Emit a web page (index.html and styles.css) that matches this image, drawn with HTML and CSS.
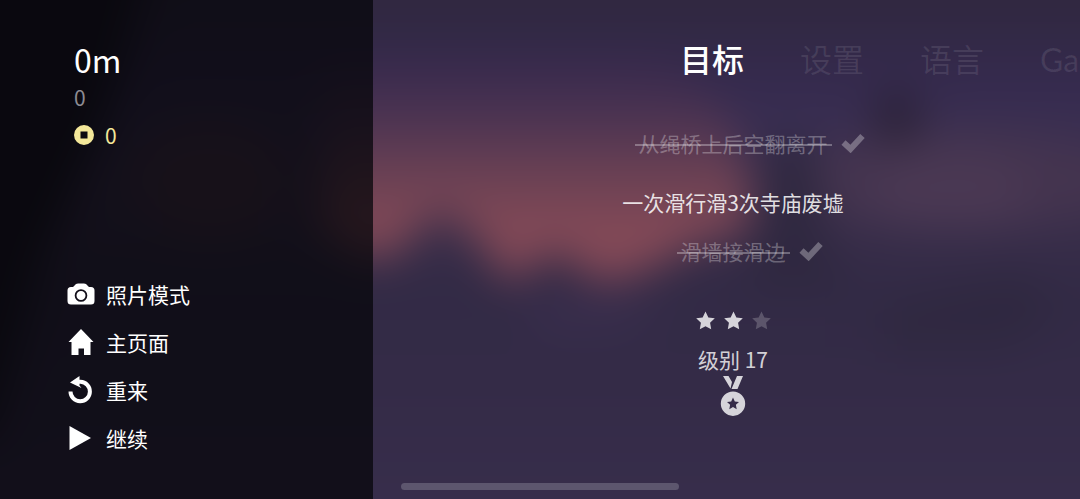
FILE: index.html
```html
<!DOCTYPE html>
<html lang="zh-CN">
<head>
    <meta charset="utf-8">
    <meta name="viewport" content="width=device-width, initial-scale=1">
    <title>目标</title>
    <link rel="stylesheet" href="styles.css">
</head>
<body>

<!-- Blurred sunset behind the menu -->
<svg class="backdrop" viewBox="0 0 1080 499" preserveAspectRatio="none" aria-hidden="true">
    <defs>
        <linearGradient id="sky" x1="0" y1="0" x2="0" y2="499" gradientUnits="userSpaceOnUse">
            <stop offset="0" stop-color="#30283f"/>
            <stop offset="0.14" stop-color="#34294c"/>
            <stop offset="0.24" stop-color="#392e52"/>
            <stop offset="0.4" stop-color="#3b2f4c"/>
            <stop offset="0.58" stop-color="#322a45"/>
            <stop offset="0.78" stop-color="#342b47"/>
            <stop offset="1" stop-color="#372d4b"/>
        </linearGradient>
        <linearGradient id="glow" x1="0" y1="60" x2="0" y2="280" gradientUnits="userSpaceOnUse">
            <stop offset="0" stop-color="#38294d"/>
            <stop offset="0.18" stop-color="#443050"/>
            <stop offset="0.32" stop-color="#523652"/>
            <stop offset="0.5" stop-color="#684053"/>
            <stop offset="0.65" stop-color="#774555"/>
            <stop offset="0.82" stop-color="#854a57"/>
            <stop offset="1" stop-color="#834858"/>
        </linearGradient>
        <filter id="soft" x="-200" y="-200" width="1480" height="899" filterUnits="userSpaceOnUse" color-interpolation-filters="sRGB">
            <feGaussianBlur stdDeviation="21"/>
        </filter>
    </defs>
    <g filter="url(#soft)">
        <rect x="-200" y="-200" width="1480" height="899" fill="url(#sky)"/>
        <ellipse cx="960" cy="180" rx="180" ry="50" fill="#44344f"/>
        <ellipse cx="950" cy="190" rx="80" ry="36" fill="#4a3853"/>
        <ellipse cx="210" cy="180" rx="80" ry="60" fill="#4a3348"/>
        <path fill="url(#glow)" d="M320 60H660L725 110L752 190L745 232L700 242L640 274L600 284L555 250L510 284L480 242L440 210L410 240L375 262L320 230Z"/>
        <path fill="#2f2840" d="M770 140H812L830 250L850 290H740L760 230Z"/>
        <path fill="#3a2e4e" d="M520 300H680L620 330H540Z"/>
        <ellipse cx="897" cy="118" rx="25" ry="28" fill="#2b2238"/>
        <path fill="#2f2840" d="M880 310L960 285L1020 270L1060 310L1010 350H880Z"/>
        <path fill="#17121f" d="M-200 -200H190L110 110L40 260L-10 440H-200Z"/>
    </g>
</svg>

<div class="pause-screen">
    <aside class="sidebar">
        <div class="stats">
            <div class="distance">0m</div>
            <div class="score">0</div>
            <div class="coins">
                <svg class="coin" viewBox="0 0 20 20" aria-hidden="true"><path fill-rule="evenodd" d="M10 0a10 10 0 1 0 0 20a10 10 0 1 0 0-20ZM6.500 6.500H13.500V13.500H6.500Z"/></svg>
                <span>0</span>
            </div>
        </div>

        <nav class="menu">
            <button class="menu-item">
                <svg class="menu-icon" viewBox="0 0 28 28" aria-hidden="true">
                    <path fill-rule="evenodd" d="M4 7H6L9 4Q10 3.500 11 3.500H17Q18 3.500 19 4L22 7H24Q27.500 7 27.500 10.500V21Q27.500 24.500 24 24.500H4Q0.500 24.500 0.500 21V10.500Q0.500 7 4 7ZM14 9.200A6.300 6.300 0 1 0 14 21.800A6.300 6.300 0 1 0 14 9.200ZM14 11A4.500 4.500 0 1 1 14 20A4.500 4.500 0 1 1 14 11Z"/>
                </svg>
                照片模式
            </button>
            <button class="menu-item">
                <svg class="menu-icon" viewBox="0 0 28 28" aria-hidden="true">
                    <path d="M14 1L26.500 14H23.500V27H17V20.500H11.500V27H4.500V14H1.500Z"/>
                </svg>
                主页面
            </button>
            <button class="menu-item">
                <svg class="menu-icon" viewBox="0 0 28 28" aria-hidden="true">
                    <path d="M11 5.800H13.500A9.700 9.700 0 1 1 3.500 15.500" fill="none" stroke="currentColor" stroke-width="4"/>
                    <path d="M12.500 0V9.500L14.500 12L3 6.500Z"/>
                </svg>
                重来
            </button>
            <button class="menu-item">
                <svg class="menu-icon" viewBox="0 0 28 28" aria-hidden="true">
                    <path d="M2.500 2V26L24 14Z"/>
                </svg>
                继续
            </button>
        </nav>
    </aside>

    <main class="content">
        <nav class="tabs">
            <button class="tab active">目标</button>
            <button class="tab">设置</button>
            <button class="tab">语言</button>
            <button class="tab">Ga</button>
        </nav>

        <ul class="goals">
            <li class="goal done">
                <s class="goal-text">从绳桥上后空翻离开</s>
                <svg class="check" viewBox="0 0 24 20" aria-hidden="true"><path d="M2.500 9.500L9.500 16L21.500 3" fill="none" stroke="currentColor" stroke-width="6"/></svg>
            </li>
            <li class="goal current">
                <span class="goal-text">一次滑行滑3次寺庙废墟</span>
            </li>
            <li class="goal done">
                <s class="goal-text">滑墙接滑边</s>
                <svg class="check" viewBox="0 0 24 20" aria-hidden="true"><path d="M2.500 9.500L9.500 16L21.500 3" fill="none" stroke="currentColor" stroke-width="6"/></svg>
            </li>
        </ul>

        <div class="level">
            <div class="stars">
                <svg class="star" viewBox="0 0 20 20" aria-hidden="true"><path d="M10 0.500L13 6.800L19.800 7.600L14.800 12.400L16 19.300L10 16L4 19.300L5.200 12.400L0.200 7.600L7 6.800Z"/></svg>
                <svg class="star" viewBox="0 0 20 20" aria-hidden="true"><path d="M10 0.500L13 6.800L19.800 7.600L14.800 12.400L16 19.300L10 16L4 19.300L5.200 12.400L0.200 7.600L7 6.800Z"/></svg>
                <svg class="star empty" viewBox="0 0 20 20" aria-hidden="true"><path d="M10 0.500L13 6.800L19.800 7.600L14.800 12.400L16 19.300L10 16L4 19.300L5.200 12.400L0.200 7.600L7 6.800Z"/></svg>
            </div>
            <div class="level-name">级别 17</div>
            <svg class="medal" viewBox="0 0 26 42" aria-hidden="true">
                <path d="M3 1H8.500L12 7L10.500 13.500ZM17 1H23L17.500 14H11.500Z"/>
                <path fill-rule="evenodd" d="M13 16.500A12.200 12.200 0 1 0 13 40.900A12.200 12.200 0 1 0 13 16.500ZM13 22.500L14.800 26.400L19 26.900L15.900 29.800L16.700 34.200L13 32.100L9.300 34.200L10.100 29.800L7 26.900L11.200 26.400Z"/>
            </svg>
        </div>
    </main>
</div>

<div class="home-bar"></div>

</body>
</html>
```
FILE: styles.css
```css
* {
    box-sizing: border-box;
}
body {
    margin: 0;
    min-height: 100vh;
    overflow: hidden;
    background-color: #342b47;
    color: #fff;
    font-family: "Noto Sans CJK SC", sans-serif;
    font-size: 21px;
}
button {
    padding: 0;
    border: none;
    background: none;
    color: inherit;
    font: inherit;
    cursor: pointer;
}
svg {
    display: block;
    fill: currentColor;
}
.backdrop {
    position: absolute;
    top: 0;
    left: 0;
    width: 100%;
    height: 100%;
}
.pause-screen {
    position: relative;
    display: grid;
    grid-template-columns: 373px minmax(0, 1fr);
    min-height: 100vh;
}

/* Left panel */
.sidebar {
    display: flex;
    flex-direction: column;
    justify-content: space-between;
    padding: 40px 20px 37px 67px;
    background-color: rgba(5, 5, 9, 0.74);
}
.stats {
    padding-left: 7px;
    line-height: 38px;
}
.distance {
    font-size: 32px;
}
.score {
    color: #8d8b92;
}
.coins {
    display: flex;
    align-items: center;
    gap: 11px;
    color: #f4e89a;
}
.coin {
    width: 20px;
    height: 20px;
}
.menu {
    display: flex;
    flex-direction: column;
    align-items: flex-start;
}
.menu-item {
    display: flex;
    align-items: center;
    gap: 11px;
    height: 48px;
}
.menu-icon {
    width: 28px;
    height: 28px;
}

/* Right side */
.content {
    padding-top: 41px;
    padding-left: 13px;
    overflow: hidden;
}
.tabs {
    display: flex;
    gap: 56px;
    padding-left: 294px;
}
.tab {
    flex-shrink: 0;
    height: 38px;
    font-family: Lato, "Noto Sans CJK SC", sans-serif;
    font-size: 32px;
    line-height: 38px;
    color: rgba(255, 255, 255, 0.09);
}
.tab.active {
    color: #fff;
    font-weight: 500;
}
.goals {
    margin: 48px 0 0;
    padding: 0;
    list-style: none;
}
.goal {
    display: grid;
    grid-template-columns: 1fr auto 1fr;
    align-items: center;
    gap: 9px;
    line-height: 32px;
    color: rgba(255, 255, 255, 0.3);
}
.goal-text {
    grid-column: 2;
}
.goal.current {
    margin: 27px 0 17px;
    color: rgba(255, 255, 255, 0.85);
}
.done .goal-text {
    position: relative;
    padding: 0 4px;
    text-decoration: none;
}
/* the strike runs a little past both ends of the text */
.done .goal-text::after {
    content: "";
    position: absolute;
    left: 0;
    right: 0;
    top: 17px;
    height: 2px;
    background-color: rgba(255, 255, 255, 0.3);
}
.check {
    width: 24px;
    height: 20px;
}
.level {
    display: flex;
    flex-direction: column;
    align-items: center;
    margin-top: 44px;
    color: rgba(255, 255, 255, 0.8);
}
.stars {
    display: flex;
    gap: 9px;
}
.star {
    width: 19px;
    height: 19px;
}
.star.empty {
    opacity: 0.25;
}
.level-name {
    margin-top: 13px;
    line-height: 32px;
}
.medal {
    width: 26px;
    height: 42px;
}
.home-bar {
    position: absolute;
    left: 50%;
    bottom: 9px;
    width: 278px;
    height: 7px;
    border-radius: 4px;
    background-color: #5d566e;
    transform: translateX(-50%);
}
```
